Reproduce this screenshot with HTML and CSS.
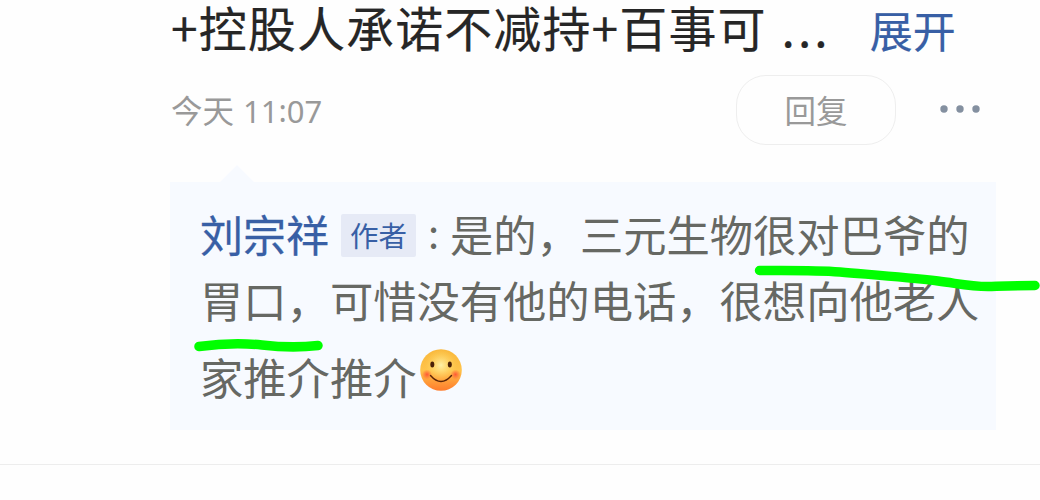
FILE: index.html
```html
<!DOCTYPE html>
<html lang="zh-CN">

<head>
    <meta charset="UTF-8">
    <meta name="viewport" content="width=device-width" />
    <title>评论</title>
    <link rel="stylesheet" href="styles.css">
</head>

<body>
    <div class="comment">
        <div class="content">
            <span>+控股人承诺不减持+百事可</span>
            <span class="ellipsis">...</span>
            <a class="expand">展开</a>
        </div>
        <div class="meta">
            <span class="time">今天 <span class="clock">11<span class="sep">:</span>07</span></span>
            <button class="replyBtn">回复</button>
            <svg class="more" viewBox="0 0 40 8">
                <circle cx="4" cy="4" r="3.7" />
                <circle cx="20" cy="4" r="3.7" />
                <circle cx="36" cy="4" r="3.7" />
            </svg>
        </div>
        <div class="reply">
            <div class="line first">
                <span class="name">刘宗祥</span>
                <span class="tag">作者</span>
                <span class="colon">:</span>
                <span>是的，三元生物很对巴爷的</span>
            </div>
            <div class="line second">胃口，可惜没有他的电话，很想向他老人</div>
            <div class="line third">
                <span>家推介推介</span>
                <svg class="smile" viewBox="0 0 42 42">
                    <defs>
                        <linearGradient id="face" x1="0" y1="0" x2="0" y2="1">
                            <stop offset="0" stop-color="#f9b83c" />
                            <stop offset="0.5" stop-color="#ffc34a" />
                            <stop offset="1" stop-color="#ff7c2c" />
                        </linearGradient>
                        <radialGradient id="shine" cx="0.5" cy="0.38" r="0.4">
                            <stop offset="0" stop-color="#fff0a8" />
                            <stop offset="1" stop-color="#ffd85c" stop-opacity="0" />
                        </radialGradient>
                        <radialGradient id="cheek">
                            <stop offset="0" stop-color="#ff4f35" stop-opacity="0.9" />
                            <stop offset="1" stop-color="#ff5a35" stop-opacity="0" />
                        </radialGradient>
                    </defs>
                    <circle cx="21" cy="21" r="20.8" fill="url(#face)" />
                    <circle cx="21" cy="21" r="20" fill="url(#shine)" />
                    <circle cx="7" cy="25.5" r="5" fill="url(#cheek)" />
                    <circle cx="35.5" cy="25.5" r="5" fill="url(#cheek)" />
                    <ellipse cx="12.3" cy="15.5" rx="2" ry="3" fill="#4a2108" />
                    <ellipse cx="29.8" cy="15.5" rx="2" ry="3" fill="#4a2108" />
                    <path d="M10.5 26.5 Q21 38.5 31.5 26.5" fill="none" stroke="#5a2408" stroke-width="1.4" stroke-linecap="round" />
                </svg>
            </div>
        </div>
    </div>

    <!-- marker strokes -->
    <svg class="marker" viewBox="0 0 1040 500">
        <path d="M759.5 270.5 C790 270.5 815 270 840 272 C875 275 905 277 938 281 C958 283.500 970 286.500 988 286.500 C1003 286 1010 285.500 1035 285.500" />
        <path d="M199 346.500 C225 343 242 343 262 345 C288 348 305 347 318 345.500" />
    </svg>
</body>

</html>
```
FILE: styles.css
```css
html, body {
    margin: 0;
    padding: 0;
    height: 500px;
    overflow: hidden;
    background: #fefefe;
    font-family: "Noto Sans CJK SC", sans-serif;
}
.comment {
    height: 464px;
    padding-left: 170px;
    border-bottom: 1px solid #ededed;
}
.content {
    display: flex;
    height: 75px;
    padding-left: 1px;
    font-size: 48px;
    letter-spacing: 1.1px;
    line-height: 53px;
    color: #262626;
    white-space: nowrap;
    -webkit-text-stroke: 0.2px;
}
.ellipsis {
    margin-left: 15px;
    letter-spacing: 3px;
}
.expand {
    margin-left: 39px;
    font-size: 43px;
    letter-spacing: 0;
    line-height: 58px;
    color: #385fa5;
}
.meta {
    display: flex;
    align-items: center;
    height: 70px;
    font-size: 31.5px;
    color: #999;
}
.time {
    box-sizing: border-box;
    width: 566px;
    padding: 0 0 3px 1px;
}
.clock {
    margin-left: 2px;
    font-family: "Noto Sans", sans-serif;
    font-size: 31px;
}
.sep {
    position: relative;
    top: -1px;
}
.replyBtn {
    box-sizing: border-box;
    width: 160px;
    height: 70px;
    padding: 0 0 3px;
    border: 1px solid #eee;
    border-radius: 30px;
    background: none;
    font: inherit;
    color: #999;
}
.more {
    width: 40px;
    height: 8px;
    margin: 0 0 2px 44px;
    fill: #8490a0;
}
.reply {
    position: relative;
    box-sizing: border-box;
    width: 826px;
    height: 248px;
    margin-top: 37px;
    padding: 18px 0 0 30px;
    background: #f7faff;
    font-size: 43.3px;
    color: #666863;
    white-space: nowrap;
}
.reply::before {
    content: "";
    position: absolute;
    top: -17px;
    left: 49px;
    border: 18px solid transparent;
    border-top: 0;
    border-bottom-color: #f7faff;
}
.line {
    display: flex;
    height: 66px;
    line-height: 66px;
}
.third {
    margin-top: 11px;
}
.name {
    font-size: 43px;
    color: #385fa5;
    -webkit-text-stroke: 0.3px;
}
.tag {
    width: 75px;
    height: 43px;
    margin: 14px 0 0 12px;
    border-radius: 2px;
    background: #e6eaf6;
    font-size: 28.5px;
    line-height: 42px;
    text-align: center;
    color: #385fa5;
}
.colon {
    width: 22px;
    margin-left: 12px;
    font-size: 40px;
    line-height: 62px;
}
.smile {
    width: 42px;
    height: 42px;
    margin: 6px 0 0 4px;
}
.marker {
    position: absolute;
    top: 0;
    left: 0;
    width: 1040px;
    height: 500px;
    fill: none;
    stroke: #00ff00;
    stroke-width: 9.5;
    stroke-linecap: round;
}
```
